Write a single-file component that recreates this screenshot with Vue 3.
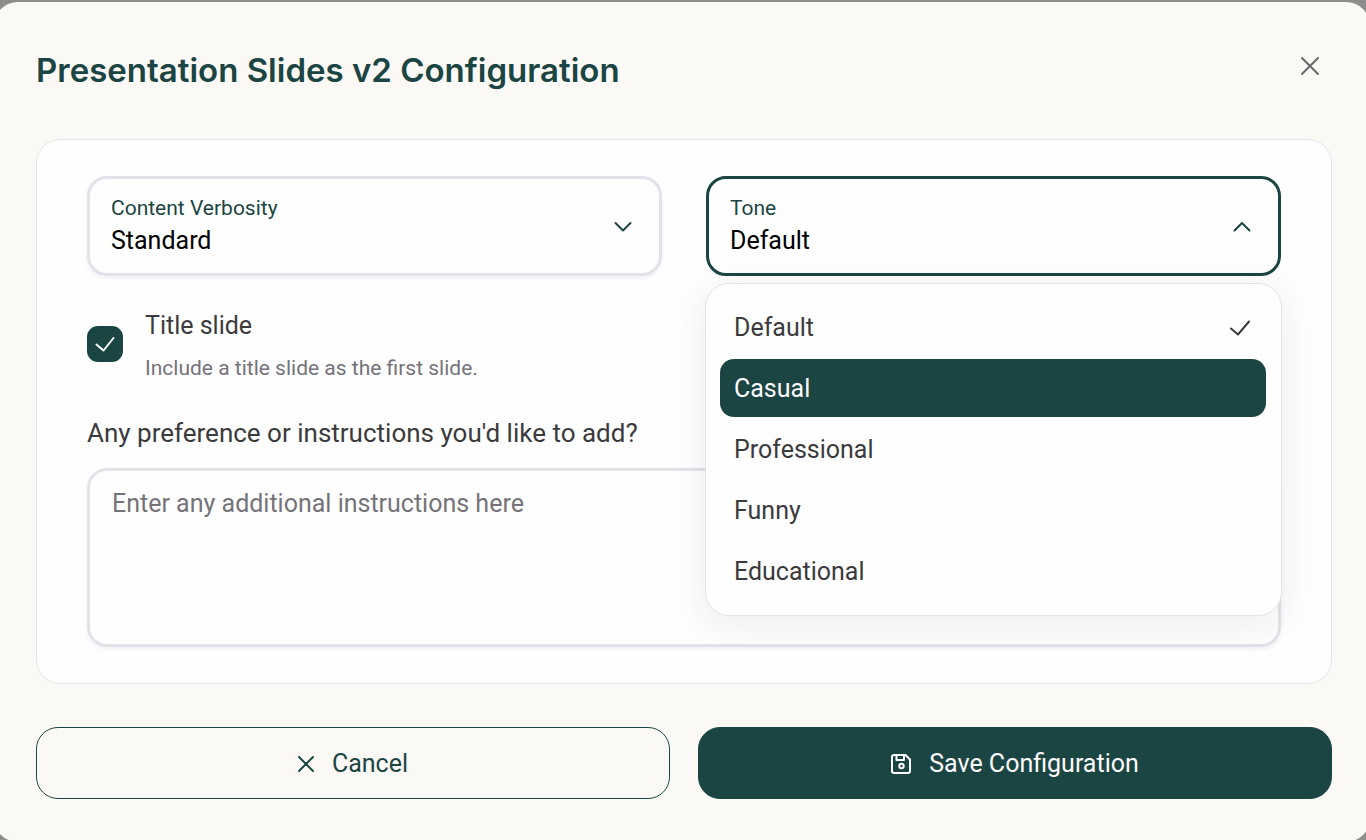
<script setup>
import { ref } from 'vue'

const verbosity = ref('Standard')
const verbosityOptions = ['Concise', 'Standard', 'Text-heavy']
const tones = ['Default', 'Casual', 'Professional', 'Funny', 'Educational']
const tone = ref('Default')
const highlighted = ref('Casual')
const open = ref(true)
const titleSlide = ref(true)
const instructions = ref('')

function choose(name) {
  tone.value = name
  open.value = false
}
</script>

<template>
  <div class="backdrop">
    <section class="modal" role="dialog" aria-labelledby="dialog-title">
      <header class="header">
        <h1 id="dialog-title">Presentation Slides v2 Configuration</h1>
        <button class="close" type="button" aria-label="Close">
          <svg width="20" height="20" viewBox="0 0 20 20" fill="none" stroke="currentColor" stroke-width="2" stroke-linecap="round">
            <path d="M2 2l16 16M18 2L2 18" />
          </svg>
        </button>
      </header>

      <form id="config" class="card" @submit.prevent>
        <div class="fields">
          <div class="field">
            <label for="verbosity">Content Verbosity</label>
            <select id="verbosity" v-model="verbosity">
              <option v-for="v in verbosityOptions" :key="v">{{ v }}</option>
            </select>
            <svg class="chevron" width="20" height="20" viewBox="0 0 20 20" fill="none" stroke="currentColor" stroke-width="2" stroke-linecap="round" stroke-linejoin="round">
              <path d="M2.500 8l7.500 7.500 7.500-7.500" />
            </svg>
          </div>
          <div class="anchor">
            <div class="field active">
              <label for="tone">Tone</label>
              <select id="tone" v-model="tone" @mousedown.prevent="open = !open">
                <option v-for="t in tones" :key="t">{{ t }}</option>
              </select>
              <svg class="chevron" width="20" height="20" viewBox="0 0 20 20" fill="none" stroke="currentColor" stroke-width="2" stroke-linecap="round" stroke-linejoin="round">
                <path d="M2.500 15.500l7.500-7.500 7.500 7.500" />
              </svg>
            </div>
            <div v-if="open" class="menu" role="listbox" aria-label="Tone">
              <button
                v-for="t in tones"
                :key="t"
                type="button"
                role="option"
                class="option"
                :class="{ highlighted: t === highlighted }"
                :aria-selected="t === tone"
                @mouseenter="highlighted = t"
                @click="choose(t)"
              >
                <span>{{ t }}</span>
                <svg v-if="t === tone" width="22" height="18" viewBox="0 0 22 18" fill="none" stroke="currentColor" stroke-width="2" stroke-linecap="round" stroke-linejoin="round">
                  <path d="M2 9.500l7 6L20 2.500" />
                </svg>
              </button>
            </div>
          </div>
        </div>

        <div class="check-row">
          <span class="box">
            <input id="title-slide" v-model="titleSlide" type="checkbox" aria-describedby="title-help" />
            <svg v-if="titleSlide" class="tick" width="20" height="16" viewBox="0 0 20 16" fill="none" stroke="currentColor" stroke-width="2" stroke-linecap="round" stroke-linejoin="round">
              <path d="M1.500 8.500l7 6L18.500 2" />
            </svg>
          </span>
          <div class="check-text">
            <label for="title-slide">Title slide</label>
            <p id="title-help">Include a title slide as the first slide.</p>
          </div>
        </div>

        <label class="question" for="instructions">Any preference or instructions you'd like to add?</label>
        <textarea id="instructions" v-model="instructions" placeholder="Enter any additional instructions here"></textarea>
      </form>

      <footer class="actions">
        <button class="btn outline" type="button">
          <svg width="16" height="16" viewBox="0 0 16 16" fill="none" stroke="currentColor" stroke-width="2" stroke-linecap="round">
            <path d="M1 1l14 14M15 1L1 15" />
          </svg>
          Cancel
        </button>
        <button class="btn solid" type="submit" form="config">
          <svg width="20" height="20" viewBox="0 0 20 20" fill="none" stroke="currentColor" stroke-width="2" stroke-linejoin="round">
            <path d="M3 1h11.500L19 5.500V17a2 2 0 0 1-2 2H3a2 2 0 0 1-2-2V3a2 2 0 0 1 2-2z" />
            <path d="M5.500 1v5H13V1" />
            <circle cx="10.500" cy="12" r="2.200" />
          </svg>
          Save Configuration
        </button>
      </footer>
    </section>
  </div>
</template>

<style>
body {
  background: #8f8d8c;
}
</style>

<style scoped>
* {
  box-sizing: border-box;
}

.backdrop {
  min-height: 100vh;
  overflow: hidden;
  background: #8f8d8c;
  font-family: Roboto, "Liberation Sans", sans-serif;
  font-size: 25px;
  line-height: 32px;
  color: #3b3a3c;
}

.modal {
  margin: 2px -4px -2px -6px;
  padding: 48px 38px 43px 42px;
  border-radius: 24px;
  background: #fbf9f6;
}

.header {
  display: flex;
  align-items: flex-start;
  justify-content: space-between;
  margin-bottom: 49px;
}

h1 {
  margin: 0;
  font-family: Inter, "Liberation Sans", sans-serif;
  font-size: 33px;
  line-height: 40px;
  font-weight: 600;
  color: #1b4543;
}

button,
select,
textarea {
  font: inherit;
}

.close {
  display: flex;
  margin: 0 4px 0 0;
  padding: 6px 8px;
  border: 0;
  background: none;
  color: #6b686d;
}

.card {
  padding: 36px 50px;
  border: 1px solid #e6e4e9;
  border-radius: 24px;
  background: #fefefe;
}

.fields {
  display: grid;
  grid-template-columns: 1fr 1fr;
  gap: 44px;
}

.anchor {
  position: relative;
}

.field {
  display: grid;
  grid-template-columns: 1fr 20px;
  row-gap: 1px;
  align-items: center;
  padding: 13px 26px 16px 21px;
  border: 3px solid #e4e2e8;
  border-radius: 20px;
  box-shadow: 0 2px 4px #f2eff6;
}

.field.active {
  border-color: #1b4543;
  box-shadow: none;
}

.field label {
  grid-area: 1 / 1;
  font-size: 21px;
  color: #1b4543;
}

.field select {
  grid-area: 2 / 1;
  height: 32px;
  padding: 0;
  border: 0;
  outline: 0;
  appearance: none;
  background: none;
  color: #000;
}

.chevron {
  grid-area: 1 / 2 / 3 / 3;
  color: #1b4543;
}

.menu {
  position: absolute;
  z-index: 2;
  top: 107px;
  left: -1px;
  right: -1px;
  display: flex;
  flex-direction: column;
  gap: 3px;
  padding: 14px 15px 15px 14px;
  border: 1px solid #e6e3e8;
  border-radius: 24px;
  background: #fefefe;
  box-shadow: 0 8px 36px rgba(60, 30, 80, 0.09);
}

.option {
  display: flex;
  align-items: center;
  justify-content: space-between;
  height: 58px;
  padding: 2px 15px 0 14px;
  border: 0;
  border-radius: 14px;
  background: none;
  color: #3b3a3c;
  text-align: left;
}

.option.highlighted {
  background: #1b4543;
  color: #fdfbfd;
}

.check-row {
  display: flex;
  align-items: center;
  gap: 22px;
  margin-top: 34px;
}

.box {
  position: relative;
  display: flex;
  margin-bottom: 6px;
  color: #fff;
}

.box input {
  width: 36px;
  height: 36px;
  margin: 0;
  border: 2px solid #1b4543;
  border-radius: 11px;
  appearance: none;
}

.box input:checked {
  background: #1b4543;
}

.tick {
  position: absolute;
  top: 10px;
  left: 8px;
  pointer-events: none;
}

.check-text {
  display: flex;
  flex-direction: column;
  gap: 10px;
}

.check-text p {
  margin: 0;
  font-size: 21px;
  color: #75727c;
}

.question {
  display: block;
  margin: 33px 0 19px;
  font-size: 26px;
}

textarea {
  display: block;
  width: 100%;
  height: 179px;
  padding: 17px 22px;
  border: 3px solid #e4e2e8;
  border-radius: 20px;
  outline: 0;
  resize: none;
  background: none;
  box-shadow: 0 2px 4px #f2eff6;
  color: #3b3a3c;
}

textarea::placeholder {
  color: #757378;
}

.actions {
  display: grid;
  grid-template-columns: 1fr 1fr;
  gap: 28px;
  margin-top: 43px;
}

.btn {
  display: flex;
  align-items: center;
  justify-content: center;
  gap: 18px;
  height: 72px;
  padding: 2px 24px 0;
  border: 1px solid #1b4543;
  border-radius: 22px;
}

.outline {
  background: none;
  color: #1b4543;
}

.solid {
  background: #1b4543;
  color: #fdfbfd;
}
</style>
